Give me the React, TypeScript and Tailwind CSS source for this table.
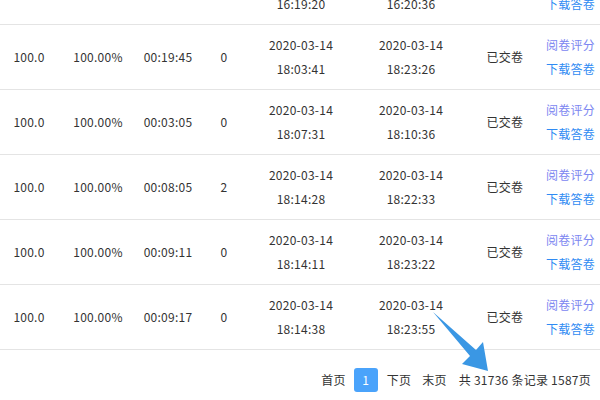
import React from 'react';

type Row = {
  score: string;
  rate: string;
  time: string;
  count: string;
  startDate: string;
  startTime: string;
  endDate: string;
  endTime: string;
};

const rows: Row[] = [
  { score: '', rate: '', time: '', count: '', startDate: '2020-03-14', startTime: '16:19:20', endDate: '2020-03-14', endTime: '16:20:36' },
  { score: '100.0', rate: '100.00%', time: '00:19:45', count: '0', startDate: '2020-03-14', startTime: '18:03:41', endDate: '2020-03-14', endTime: '18:23:26' },
  { score: '100.0', rate: '100.00%', time: '00:03:05', count: '0', startDate: '2020-03-14', startTime: '18:07:31', endDate: '2020-03-14', endTime: '18:10:36' },
  { score: '100.0', rate: '100.00%', time: '00:08:05', count: '2', startDate: '2020-03-14', startTime: '18:14:28', endDate: '2020-03-14', endTime: '18:22:33' },
  { score: '100.0', rate: '100.00%', time: '00:09:11', count: '0', startDate: '2020-03-14', startTime: '18:14:11', endDate: '2020-03-14', endTime: '18:23:22' },
  { score: '100.0', rate: '100.00%', time: '00:09:17', count: '0', startDate: '2020-03-14', startTime: '18:14:38', endDate: '2020-03-14', endTime: '18:23:55' },
];

const ExamRow: React.FC<{ row: Row }> = ({ row }) => (
  <div className="flex h-[65px] items-center border-b border-[#e4e4e4] text-center leading-[24px]">
    <div className="w-[58px]">{row.score}</div>
    <div className="w-[80px]">{row.rate}</div>
    <div className="w-[60px]">{row.time}</div>
    <div className="w-[52px]">{row.count}</div>
    <div className="w-[102px]">
      <div>{row.startDate}</div>
      <div>{row.startTime}</div>
    </div>
    <div className="w-[118px]">
      <div>{row.endDate}</div>
      <div>{row.endTime}</div>
    </div>
    <div className="w-[70px]">已交卷</div>
    <div className="w-[60px] pl-[6px] text-left">
      <div className="text-[#7c86f1]">阅卷评分</div>
      <div className="text-[#2f8bf3]">下载答卷</div>
    </div>
  </div>
);

export default function App() {
  return (
    <div
      className="relative h-[400px] w-[600px] overflow-hidden bg-white text-[12px] tracking-[0.25px] text-[#333]"
      style={{ fontFamily: '"Noto Sans CJK SC", "Noto Sans", sans-serif' }}
    >
      <div className="-mt-[40px]">
        {rows.map((row, i) => (
          <ExamRow key={i} row={row} />
        ))}
      </div>

      {/* Pagination */}
      <div className="flex h-[51px] items-center justify-end pr-[9px] pt-[8px]">
        <span>首页</span>
        <span className="ml-[8px] flex h-[24px] w-[24px] items-center justify-center rounded-[3px] bg-[#4aa3fb] text-white">1</span>
        <span className="ml-[9px]">下页</span>
        <span className="ml-[11px]">末页</span>
        <span className="ml-[12px]">共 31736 条记录 1587页</span>
      </div>

      {/* Annotation arrow */}
      <svg className="absolute left-0 top-0" width="600" height="400" viewBox="0 0 600 400">
        <polygon
          points="433,312 476,350 483,342 488,371 462,364 470,356"
          fill="#3a97e4"
        />
      </svg>
    </div>
  );
}
